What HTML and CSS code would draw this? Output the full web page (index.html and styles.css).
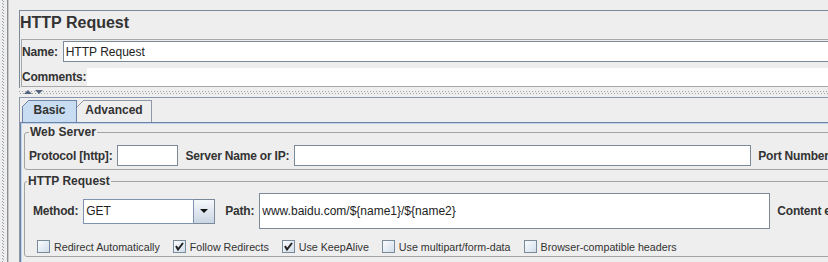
FILE: index.html
```html
<!DOCTYPE html>
<html lang="en">

<head>
    <meta charset="UTF-8">
    <title>HTTP Request</title>
    <link rel="stylesheet" href="styles.css">
</head>

<body>
    <div class="window">
        <!-- left tree splitter -->
        <div class="rail">
            <div class="rail-dots"></div>
            <div class="rail-line"></div>
        </div>

        <div class="main">
            <div class="title-panel">
                <h1 class="title">HTTP Request</h1>
                <div class="name-box">
                    <div class="field-row name-row">
                        <label class="lbl" for="name">Name:</label>
                        <input class="text name-input" id="name" type="text" value="HTTP Request">
                    </div>
                    <div class="field-row comments-row">
                        <label class="lbl">Comments:</label>
                        <div class="comments"></div>
                    </div>
                </div>
            </div>

            <div class="divider">
                <span class="arrow-up"></span>
                <span class="arrow-down"></span>
            </div>

            <div class="tab-pane">
                <div class="tabs">
                    <div class="tab tab-basic tab-active">Basic</div>
                    <div class="tab tab-advanced">Advanced</div>
                </div>

                <div class="tab-body">
                    <fieldset class="group web-server">
                        <legend>Web Server</legend>
                        <div class="field-row server-row">
                            <label class="lbl">Protocol [http]:</label>
                            <input class="text protocol-input" type="text">
                            <label class="lbl gap-left">Server Name or IP:</label>
                            <input class="text server-input" type="text">
                            <label class="lbl gap-left">Port Number:</label>
                        </div>
                    </fieldset>

                    <fieldset class="group http-request">
                        <legend>HTTP Request</legend>
                        <div class="field-row method-row">
                            <label class="lbl">Method:</label>
                            <div class="combo">
                                <div class="combo-text">GET</div>
                                <div class="combo-btn"><span class="combo-arrow"></span></div>
                            </div>
                            <label class="lbl path-lbl">Path:</label>
                            <input class="text path-input" type="text" value="www.baidu.com/${name1}/${name2}">
                            <label class="lbl gap-left">Content encoding:</label>
                        </div>

                        <div class="checks">
                            <label class="check-item"><span class="check"></span>Redirect Automatically</label>
                            <label class="check-item"><span class="check"><svg width="11" height="11" viewBox="0 0 11 11"><path d="M2 5 L4 8.5 L9 2" fill="none" stroke="#222" stroke-width="2"/></svg></span>Follow Redirects</label>
                            <label class="check-item"><span class="check"><svg width="11" height="11" viewBox="0 0 11 11"><path d="M2 5 L4 8.5 L9 2" fill="none" stroke="#222" stroke-width="2"/></svg></span>Use KeepAlive</label>
                            <label class="check-item"><span class="check"></span>Use multipart/form-data</label>
                            <label class="check-item"><span class="check"></span>Browser-compatible headers</label>
                        </div>
                    </fieldset>
                </div>
            </div>
        </div>
    </div>
</body>

</html>
```

FILE: styles.css
```css
html,
body {
    margin: 0;
    padding: 0;
    overflow: hidden;
}

body {
    background-color: #eeeeee;
    font-family: "Liberation Sans", Arial, sans-serif;
    color: #333;
    width: 828px;
    height: 262px;
}

.window {
    display: flex;
    width: 1100px;
    height: 262px;
}

/* left splitter strip */
.rail {
    width: 19px;
    flex: none;
    display: flex;
    padding-left: 2px;
    box-sizing: border-box;
}

.rail-dots {
    width: 2px;
    background-image:
        linear-gradient(#9aa3ad 1px, transparent 1px),
        linear-gradient(#9aa3ad 1px, transparent 1px);
    background-size: 1px 3px, 1px 3px;
    background-position: 0 0, 1px 1px;
    background-repeat: repeat-y;
}

.rail-line {
    width: 1px;
    margin-left: 3px;
    background: #8e8e8e;
    box-shadow: 1px 0 0 #c9c9c9;
}

.main {
    flex: 1;
    padding-top: 10px;
}

/* title + name/comments */
.title-panel {
    border-top: 1px solid #7a8a99;
    border-left: 1px solid #7a8a99;
    padding-bottom: 1px;
}

.title {
    margin: 0;
    font-size: 16px;
    line-height: 23px;
    padding-bottom: 5px;
    color: #333;
}

.name-box {
    margin-left: 1px;
    border: 1px solid #a8a8a8;
    border-right: none;
    padding-top: 1px;
}

.field-row {
    display: flex;
    align-items: center;
}

.lbl {
    font-size: 12px;
    font-weight: bold;
    letter-spacing: -0.2px;
    color: #333;
    white-space: nowrap;
    flex: none;
}

.text {
    font-family: "Liberation Sans", Arial, sans-serif;
    font-size: 12px;
    color: #222;
    height: 21px;
    padding: 0 2px;
    margin: 0;
    border: 1px solid #7a8a99;
    border-radius: 0;
    background: #fff;
    box-sizing: border-box;
    outline: none;
}

.name-row {
    height: 21px;
}

.name-input {
    flex: 1;
    margin-left: 5px;
}

.comments-row {
    margin-top: 6px;
    height: 18px;
}

.comments {
    flex: 1;
    height: 18px;
    margin-left: 1px;
    background: #fff;
}

/* split pane divider */
.divider {
    height: 9px;
    display: flex;
    align-items: flex-start;
    padding: 2px 0 0 5px;
    box-sizing: border-box;
    background-image:
        linear-gradient(90deg, #a2a2a2 1px, transparent 1px),
        linear-gradient(90deg, #a2a2a2 1px, transparent 1px);
    background-size: 3px 1px, 3px 1px;
    background-position: 0 3px, 1px 5px;
    background-repeat: repeat-x;
}

.arrow-up {
    width: 0;
    height: 0;
    border-left: 4px solid transparent;
    border-right: 4px solid transparent;
    border-bottom: 4px solid #52627f;
}

.arrow-down {
    width: 0;
    height: 0;
    margin-left: 3px;
    border-left: 4px solid transparent;
    border-right: 4px solid transparent;
    border-top: 4px solid #52627f;
}

/* tabs */
.tab-pane {
    border-top: 1px solid #8797b0;
    border-left: 1px solid #8d96a3;
    padding-top: 2px;
}

.tabs {
    display: flex;
    margin-left: 2px;
}

.tab {
    position: relative;
    height: 21px;
    line-height: 18px;
    font-size: 12px;
    font-weight: bold;
    text-align: center;
    border: 1px solid #8e98a6;
    border-bottom: none;
    --corner: #8e98a6;
}

.tab::before {
    content: "";
    position: absolute;
    top: -1px;
    left: -1px;
    width: 7px;
    height: 7px;
    background: linear-gradient(to bottom right, #eeeeee 0 calc(50% - 0.6px), var(--corner) calc(50% - 0.6px) calc(50% + 0.6px), transparent calc(50% + 0.6px));
}

.tab-basic {
    width: 53px;
    z-index: 1;
}

.tab-advanced {
    width: 74px;
    border-left: none;
}

.tab-advanced::before {
    left: 0;
}

.tab-active {
    background: #c8ddf2;
    border-color: #6f83a8;
    --corner: #6f83a8;
}

.tab-body {
    border-top: 1px solid #6f83a8;
    border-left: 1px solid #6f83a8;
    box-shadow: inset 1px 1px 0 #bcd3ea;
    padding: 2px 0 0 3px;
    height: 200px;
}

/* titled groups */
.group {
    margin: 0;
    padding: 0 0 3px 4px;
    border: 1px solid #a3a3a3;
    border-radius: 3px;
    min-width: 0;
}

.group legend {
    font-size: 12px;
    font-weight: bold;
    line-height: 14px;
    padding: 0 1px;
    color: #333;
}

.server-row {
    margin-top: 6px;
    height: 21px;
}

.protocol-input {
    width: 61px;
    margin-left: 5px;
}

.server-input {
    width: 457px;
    margin-left: 5px;
}

.gap-left {
    margin-left: 7px;
}

.http-request {
    margin-top: 4px;
    padding-left: 5px;
}

.http-request legend {
    margin-left: -3px;
}

.method-row {
    margin-top: 5px;
    height: 36px;
    padding-left: 3px;
}

.combo {
    display: flex;
    width: 132px;
    height: 25px;
    margin-left: 5px;
    flex: none;
}

.combo-text {
    flex: 1;
    border: 1px solid #8193b2;
    background: #fff;
    font-size: 12px;
    line-height: 23px;
    padding-left: 2px;
    color: #222;
}

.combo-btn {
    width: 20px;
    border: 1px solid #7a8a99;
    border-left: none;
    background: linear-gradient(#f6f8fb, #cad6e4);
    display: flex;
    align-items: center;
    justify-content: center;
}

.combo-arrow {
    width: 0;
    height: 0;
    border-left: 4px solid transparent;
    border-right: 4px solid transparent;
    border-top: 4px solid #111;
}

.path-lbl {
    margin-left: 10px;
}

.path-input {
    width: 511px;
    height: 36px;
    margin-left: 5px;
}

/* checkboxes */
.checks {
    display: flex;
    gap: 13px;
    margin-top: 11px;
    padding-left: 7px;
}

.check-item {
    display: flex;
    align-items: center;
    font-size: 10.7px;
    color: #333;
    white-space: nowrap;
}

.check {
    width: 13px;
    height: 13px;
    margin-right: 4px;
    box-sizing: border-box;
    border: 1px solid #7a8a99;
    background: linear-gradient(135deg, #fbfcfe, #d2deeb);
    display: flex;
}
```
